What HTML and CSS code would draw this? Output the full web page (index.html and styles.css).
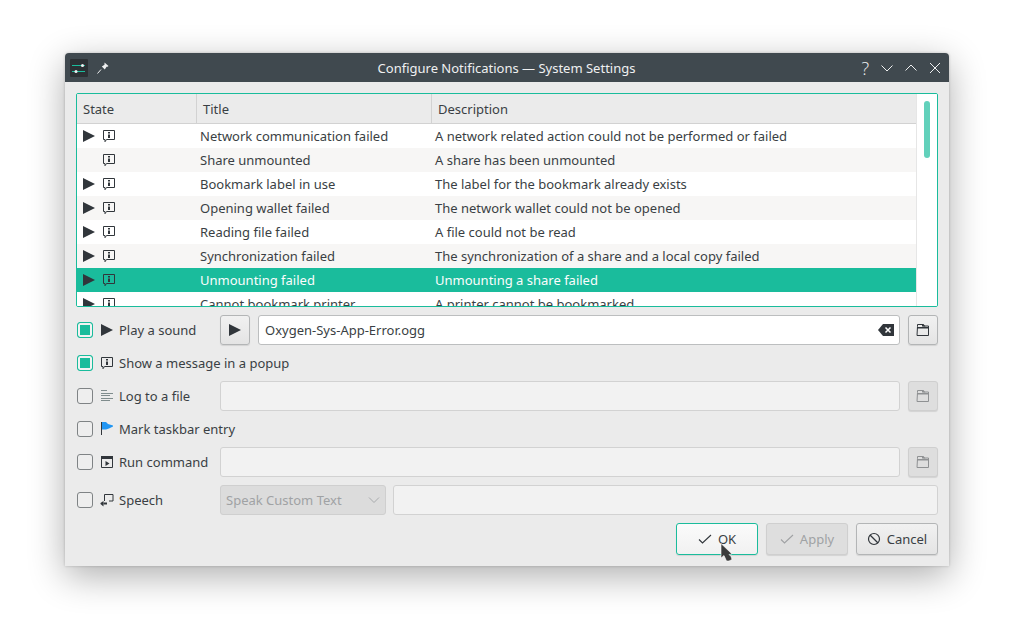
FILE: index.html
```html
<!DOCTYPE html>
<html lang="en">
<head>
  <meta charset="UTF-8">
  <title>Configure Notifications — System Settings</title>
  <link rel="stylesheet" href="styles.css">
</head>
<body>
  <svg class="sprite" width="0" height="0">
    <symbol id="i-play" viewBox="0 0 14 14"><path d="M1 1v12l12-6z" fill="currentColor"/></symbol>
    <symbol id="i-msg" viewBox="0 0 14 14"><path d="M1.500 1.500h11v9h-8l-1.500 2.200v-2.200h-1.500z" fill="none" stroke="currentColor"/><path d="M6 3h2v1.500h-2zM6 5.500h2v3.500h-2z" fill="currentColor"/></symbol>
    <symbol id="i-log" viewBox="0 0 14 14"><path d="M1 1.500h6M1 4.500h12M1 6.500h9M1 9.500h12M1 11.500h9" stroke="#7f8c8d" fill="none"/></symbol>
    <symbol id="i-flag" viewBox="0 0 14 14"><path d="M1.500 0v13" stroke="#31363b" fill="none"/><path d="M2 0h4l2 2 5 1.500v1l-4 2-3 1h-4z" fill="#2196f3"/></symbol>
    <symbol id="i-run" viewBox="0 0 14 14"><path d="M1.500 1.500h11v11h-11z" fill="none" stroke="currentColor"/><path d="M1 1h12v3h-12z" fill="currentColor"/><path d="M5.500 6v5l4-2.500z" fill="currentColor"/></symbol>
    <symbol id="i-speech" viewBox="0 0 14 14"><path d="M4.500 8v-6.500h8.500v6.500h-4" fill="none" stroke="currentColor"/><path d="M0.500 10l3-2v5.500l-3-2.500z" fill="currentColor"/><path d="M3.500 9.500h3.500v2h-3.500z" fill="currentColor"/></symbol>
    <symbol id="i-folder" viewBox="0 0 14 14"><path d="M1.500 3.500v-2h5l1 1.500h5v9.500h-11.500z" fill="none" stroke="currentColor"/><path d="M1 4h12v1.500h-12zM6 1h1.500l2 2.500h-3.500z" fill="currentColor"/></symbol>
    <symbol id="i-check" viewBox="0 0 14 14"><path d="M1 7.500l3.500 3.500 8.500-8" fill="none" stroke="currentColor" stroke-width="1.100"/></symbol>
  </svg>

  <div class="window">
    <div class="titlebar">
      <div class="tb-left">
        <svg class="app-icon" width="18" height="18" viewBox="0 0 18 18">
          <rect width="18" height="18" rx="1" fill="#2c3034"/>
          <path d="M2 6.500h13M2 12.500h13" stroke="#1abc9c"/>
          <circle cx="12.500" cy="6.500" r="1.500" fill="#ecf0f1"/><circle cx="6" cy="12.500" r="1.500" fill="#ecf0f1"/>
        </svg>
        <svg class="pin" width="14" height="14" viewBox="0 0 14 14"><path d="M8.500 1.500l4 3.500-1 .8-1 0-1.700 2.700-3-3 2.700-1.700 0-1z" fill="#eff0f1"/><path d="M5 8.500l-3.500 4" stroke="#eff0f1"/></svg>
      </div>
      <div class="tb-title">Configure Notifications — System Settings</div>
      <div class="tb-right">
        <span class="tb-help">?</span>
        <svg width="12" height="12" viewBox="0 0 12 12"><path d="M.5 3.500l5.500 5.500 5.500-5.500" fill="none" stroke="#eff0f1"/></svg>
        <svg width="12" height="12" viewBox="0 0 12 12"><path d="M.5 8.500l5.500-5.500 5.500 5.500" fill="none" stroke="#eff0f1"/></svg>
        <svg width="12" height="12" viewBox="0 0 12 12"><path d="M1 1l10 10M11 1l-10 10" fill="none" stroke="#eff0f1"/></svg>
      </div>
    </div>

    <div class="content">
      <div class="list">
        <div class="list-main">
          <div class="list-head">
            <div class="col-state">State</div>
            <div class="col-title">Title</div>
            <div class="col-desc">Description</div>
          </div>
          <div class="list-rows">
            <div class="row">
              <div class="cell-state"><svg class="ic"><use href="#i-play"/></svg><svg class="ic"><use href="#i-msg"/></svg></div>
              <div class="cell-title">Network communication failed</div>
              <div class="cell-desc">A network related action could not be performed or failed</div>
            </div>
            <div class="row alt">
              <div class="cell-state"><span class="ic"></span><svg class="ic"><use href="#i-msg"/></svg></div>
              <div class="cell-title">Share unmounted</div>
              <div class="cell-desc">A share has been unmounted</div>
            </div>
            <div class="row">
              <div class="cell-state"><svg class="ic"><use href="#i-play"/></svg><svg class="ic"><use href="#i-msg"/></svg></div>
              <div class="cell-title">Bookmark label in use</div>
              <div class="cell-desc">The label for the bookmark already exists</div>
            </div>
            <div class="row alt">
              <div class="cell-state"><svg class="ic"><use href="#i-play"/></svg><svg class="ic"><use href="#i-msg"/></svg></div>
              <div class="cell-title">Opening wallet failed</div>
              <div class="cell-desc">The network wallet could not be opened</div>
            </div>
            <div class="row">
              <div class="cell-state"><svg class="ic"><use href="#i-play"/></svg><svg class="ic"><use href="#i-msg"/></svg></div>
              <div class="cell-title">Reading file failed</div>
              <div class="cell-desc">A file could not be read</div>
            </div>
            <div class="row alt">
              <div class="cell-state"><svg class="ic"><use href="#i-play"/></svg><svg class="ic"><use href="#i-msg"/></svg></div>
              <div class="cell-title">Synchronization failed</div>
              <div class="cell-desc">The synchronization of a share and a local copy failed</div>
            </div>
            <div class="row selected">
              <div class="cell-state"><svg class="ic"><use href="#i-play"/></svg><svg class="ic"><use href="#i-msg"/></svg></div>
              <div class="cell-title">Unmounting failed</div>
              <div class="cell-desc">Unmounting a share failed</div>
            </div>
            <div class="row">
              <div class="cell-state"><svg class="ic"><use href="#i-play"/></svg><svg class="ic"><use href="#i-msg"/></svg></div>
              <div class="cell-title">Cannot bookmark printer</div>
              <div class="cell-desc">A printer cannot be bookmarked</div>
            </div>
          </div>
        </div>
        <div class="scrollbar"><div class="thumb"></div></div>
      </div>

      <div class="form">
        <div class="form-row">
          <span class="checkbox on"></span>
          <svg class="ic opt-ic"><use href="#i-play"/></svg>
          <span class="opt-label">Play a sound</span>
          <button class="btn square"><svg class="ic"><use href="#i-play"/></svg></button>
          <div class="field filled">
            <span>Oxygen-Sys-App-Error.ogg</span>
            <svg class="clear" width="16" height="12" viewBox="0 0 16 12"><path d="M5 0h11v12h-11l-5-6z" fill="#31363b"/><path d="M7.500 3.500l5 5M12.500 3.500l-5 5" stroke="#fff" stroke-width="1.500"/></svg>
          </div>
          <button class="btn square"><svg class="ic"><use href="#i-folder"/></svg></button>
        </div>
        <div class="form-row">
          <span class="checkbox on"></span>
          <svg class="ic opt-ic"><use href="#i-msg"/></svg>
          <span class="opt-label">Show a message in a popup</span>
        </div>
        <div class="form-row">
          <span class="checkbox"></span>
          <svg class="ic opt-ic"><use href="#i-log"/></svg>
          <span class="opt-label">Log to a file</span>
          <div class="field"></div>
          <button class="btn square disabled"><svg class="ic"><use href="#i-folder"/></svg></button>
        </div>
        <div class="form-row">
          <span class="checkbox"></span>
          <svg class="ic opt-ic"><use href="#i-flag"/></svg>
          <span class="opt-label">Mark taskbar entry</span>
        </div>
        <div class="form-row">
          <span class="checkbox"></span>
          <svg class="ic opt-ic"><use href="#i-run"/></svg>
          <span class="opt-label">Run command</span>
          <div class="field"></div>
          <button class="btn square disabled"><svg class="ic"><use href="#i-folder"/></svg></button>
        </div>
        <div class="form-row speech">
          <span class="checkbox"></span>
          <svg class="ic opt-ic"><use href="#i-speech"/></svg>
          <span class="opt-label">Speech</span>
          <div class="combo">
            <span>Speak Custom Text</span>
            <svg width="12" height="12" viewBox="0 0 12 12"><path d="M1 3.500l5 5 5-5" fill="none" stroke="#a8abad"/></svg>
          </div>
          <div class="field"></div>
        </div>
      </div>

      <div class="actions">
        <button class="btn action focus"><svg class="ic"><use href="#i-check"/></svg>OK</button>
        <button class="btn action disabled"><svg class="ic"><use href="#i-check"/></svg>Apply</button>
        <button class="btn action">
          <svg class="ic" viewBox="0 0 14 14"><circle cx="7" cy="7" r="5.500" fill="none" stroke="currentColor" stroke-width="1.200"/><path d="M3 3l8 8" stroke="currentColor" stroke-width="1.200"/></svg>Cancel
        </button>
        <svg class="cursor" width="14" height="20" viewBox="0 0 14 20"><path d="M1 0.500v14.500l3-2.500 2.500 5.500 2.500 0 3-1.500-1-3-2-2 3-.5z" fill="#3b3b3b" stroke="#fff" stroke-width=".6"/></svg>
      </div>
    </div>
  </div>
</body>
</html>
```

FILE: styles.css
```css
* {
  box-sizing: border-box;
}
html, body {
  height: 100%;
}
body {
  margin: 0;
  padding: 53px 0 0 65px;
  background: white;
  overflow: hidden;
  font-family: "Noto Sans", sans-serif;
  font-size: 13px;
  color: #3a3f44;
}
.sprite {
  display: block;
  height: 0;
}
.window {
  width: 884px;
  height: 513px;
  background: #ebebeb;
  border-radius: 4px 4px 0 0;
  box-shadow: 0 10px 36px rgba(0,0,0,0.32), 0 0 3px rgba(0,0,0,0.2);
}

/* title bar */
.titlebar {
  height: 29px;
  background: #40494f;
  color: #eff0f1;
  border-radius: 4px 4px 0 0;
  display: flex;
  align-items: center;
  justify-content: space-between;
  padding: 0 8px 0 5px;
}
.tb-left {
  width: 122px;
  display: flex;
  align-items: center;
  gap: 8px;
}
.tb-title {
  font-size: 13px;
}
.tb-right {
  width: 120px;
  display: flex;
  align-items: center;
  justify-content: flex-end;
  gap: 12px;
}
.tb-help {
  font-family: "Open Sans", sans-serif;
  font-size: 18px;
  line-height: 18px;
  font-weight: 300;
}

.content {
  padding: 11px 11px 0;
}

/* notification list */
.list {
  height: 214px;
  border: 1px solid #1abc9c;
  border-radius: 2px;
  background: white;
  display: flex;
  overflow: hidden;
}
.list-main {
  width: 839px;
  flex: none;
}
.list-head {
  height: 30px;
  display: flex;
  align-items: center;
  background: #ebebeb;
  border-bottom: 1px solid #d2d2d2;
}
.list-head > div {
  height: 100%;
  display: flex;
  align-items: center;
  padding-left: 6px;
  border-right: 1px solid #d2d2d2;
}
.col-state {
  width: 120px;
}
.col-title {
  width: 235px;
}
.col-desc {
  flex: 1;
  border-right: none !important;
}
.row {
  height: 24px;
  display: flex;
  align-items: center;
  background: white;
}
.row.alt {
  background: #f7f6f5;
}
.row.selected {
  background: #1abc9c;
  color: #fcfcfc;
}
.cell-state {
  width: 120px;
  padding-left: 5px;
  display: flex;
  align-items: center;
  gap: 6px;
  color: #31363b;
}
.cell-title {
  width: 235px;
  padding-left: 3px;
}
.cell-desc {
  padding-left: 3px;
}
.ic {
  width: 14px;
  height: 14px;
  display: block;
  flex: none;
  color: #31363b;
}
.scrollbar {
  flex: 1;
  background: white;
  border-left: 1px solid #e6e6e6;
  padding: 7px 0 0 7px;
}
.thumb {
  width: 6px;
  height: 57px;
  border-radius: 3px;
  background: #62d1bb;
}

/* options */
.form {
  margin-top: 8px;
  display: flex;
  flex-direction: column;
  gap: 3px;
}
.form-row {
  height: 30px;
  display: flex;
  align-items: center;
}
.form-row.speech {
  margin-top: 5px;
}
.checkbox {
  width: 16px;
  height: 16px;
  margin-left: 1px;
  border: 1px solid #7f8385;
  border-radius: 3px;
  background: #eeeeee;
  flex: none;
}
.checkbox.on {
  border-color: #1abc9c;
  background: #1abc9c;
  box-shadow: inset 0 0 0 2px #f2f2f2;
}
.opt-ic {
  margin-left: 7px;
}
.opt-label {
  margin-left: 5px;
  width: 101px;
  white-space: nowrap;
  flex: none;
}
.btn {
  font: inherit;
  color: inherit;
  height: 30px;
  border: 1px solid #b3b5b6;
  border-radius: 3px;
  background: linear-gradient(#f1f1f1, #e4e4e4);
  box-shadow: 0 1px 1px rgba(0,0,0,0.1);
  display: flex;
  align-items: center;
  justify-content: center;
  padding: 0;
  flex: none;
}
.btn.square {
  width: 30px;
}
.btn.disabled {
  background: #dedede;
  border-color: #cfcfcf;
}
.btn.disabled .ic {
  color: #8f9193;
}
.field {
  flex: 1;
  height: 30px;
  border: 1px solid #d2d2d2;
  border-radius: 3px;
  background: #f2f2f2;
  margin-right: 8px;
  padding: 0 5px 0 6px;
  display: flex;
  align-items: center;
  justify-content: space-between;
}
.field.filled {
  background: white;
  border-color: #bcbebf;
  margin-left: 8px;
}
.speech .field {
  margin: 0 0 0 7px;
}
.clear {
  display: block;
}
.combo {
  width: 166px;
  height: 30px;
  flex: none;
  background: #dcdcdc;
  border: 1px solid #cfcfcf;
  border-radius: 3px;
  color: #a0a2a4;
  padding: 0 5px;
  display: flex;
  align-items: center;
  justify-content: space-between;
}

/* dialog buttons */
.actions {
  position: relative;
  margin-top: 8px;
  display: flex;
  justify-content: flex-end;
  gap: 8px;
}
.btn.action {
  width: 82px;
  height: 32px;
  gap: 6px;
}
.btn.focus {
  border-color: #1abc9c;
  background: linear-gradient(#fbfbfb, #f1f1f1);
}
.btn.action.disabled {
  color: #a0a2a4;
}
.btn.action.disabled .ic {
  color: #a0a2a4;
}
.cursor {
  position: absolute;
  left: 644px;
  top: 20px;
}
```
